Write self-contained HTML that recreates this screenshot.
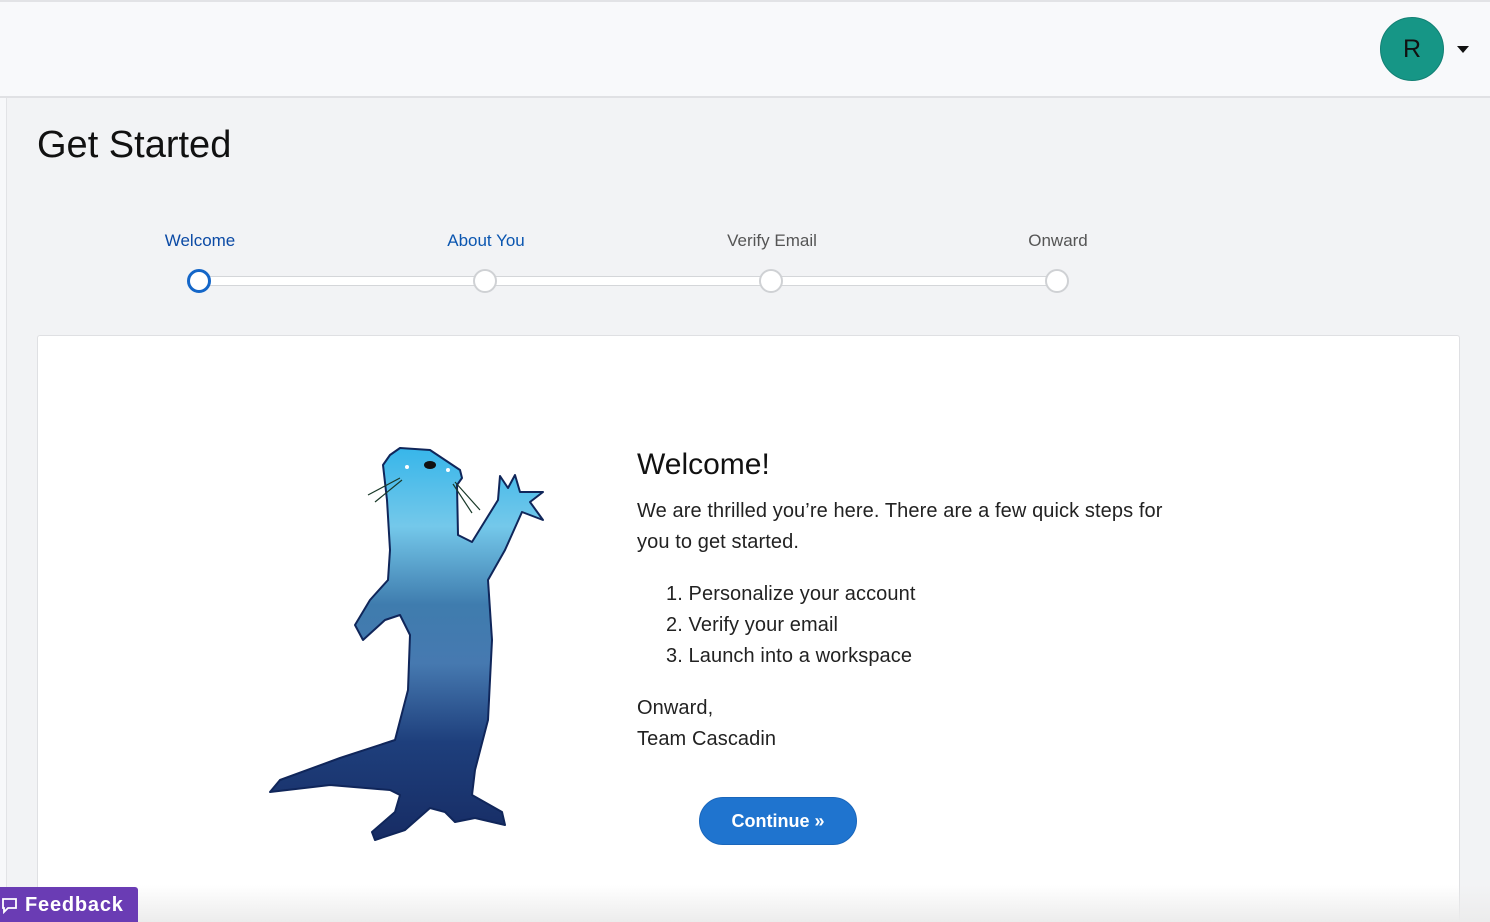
<!DOCTYPE html>
<html><head><meta charset="utf-8"><style>
*{margin:0;padding:0;box-sizing:border-box}
html,body{width:1490px;height:922px;overflow:hidden}
body{background:#f2f3f5;font-family:"Liberation Sans",sans-serif;position:relative}
.a{position:absolute;white-space:nowrap}
.hdr{position:absolute;left:0;top:0;width:1490px;height:98px;background:#f8f9fb;border-top:2px solid #e2e3e6;border-bottom:2px solid #e0e1e4}
.side{position:absolute;left:0;top:98px;width:7px;height:824px;background:#f7f8fa;border-right:1px solid #e2e3e6}
.card{position:absolute;left:37px;top:335px;width:1423px;height:587px;background:#fff;border:1px solid #dfe0e3;border-bottom:none;border-radius:3px 3px 0 0}
.step{font-size:17px;color:#555;transform:translateX(-50%)}
.dot{position:absolute;width:24px;height:24px;border-radius:50%;background:#fff;border:2px solid #cfd1d4;top:269px}
.t{font-size:20px;color:#222;letter-spacing:0.1px}
</style></head><body>
<div class="hdr"></div>
<div class="a" style="left:1380px;top:17px;width:64px;height:64px;border-radius:50%;background:#169686;border:1px solid #128074;color:#111;font-size:25px;text-align:center;line-height:62px">R</div>
<div class="a" style="left:1457px;top:46px;width:0;height:0;border-left:6px solid transparent;border-right:6px solid transparent;border-top:7px solid #111"></div>
<div class="side"></div>
<div class="a" style="left:37px;top:124px;font-size:38px;color:#111">Get Started</div>
<div class="a step" style="left:200px;top:231px;color:#0b4aa5">Welcome</div>
<div class="a step" style="left:486px;top:231px;color:#0b56b0">About You</div>
<div class="a step" style="left:772px;top:231px">Verify Email</div>
<div class="a step" style="left:1058px;top:231px">Onward</div>
<div class="a" style="left:199px;top:276px;width:859px;height:10px;background:#fff;border:1px solid #d4d6d9;border-radius:4px"></div>
<div class="dot" style="left:187px;border:3px solid #1466c8"></div>
<div class="dot" style="left:473px"></div>
<div class="dot" style="left:759px"></div>
<div class="dot" style="left:1045px"></div>
<div class="card"></div>
<svg class="a" style="left:260px;top:440px" width="300" height="410" viewBox="0 0 300 410">
<defs><linearGradient id="g" x1="0" y1="0" x2="0" y2="1">
<stop offset="0" stop-color="#37b6ea"/><stop offset="0.2" stop-color="#74c8ea"/><stop offset="0.4" stop-color="#3f7cae"/><stop offset="0.55" stop-color="#4679b0"/><stop offset="0.75" stop-color="#1e3f7c"/><stop offset="1" stop-color="#172c64"/></linearGradient></defs>
<path d="M130,15 L140,8 L170,10 L200,30 L202,38 L197,45 L198,95 L212,102 L238,60 L240,36 L248,48 L255,35 L260,52 L283,52 L270,62 L283,80 L262,72 L245,110 L228,140 L232,200 L228,280 L215,330 L212,355 L242,372 L245,385 L215,378 L195,382 L185,372 L170,368 L145,390 L115,400 L112,392 L135,372 L140,355 L130,350 L70,345 L10,352 L20,340 L80,318 L135,300 L148,250 L150,195 L140,175 L125,180 L103,200 L95,185 L110,160 L128,140 L130,110 L127,60 L123,25 Z" fill="url(#g)" stroke="#10265a" stroke-width="2" stroke-linejoin="round"/>
<ellipse cx="170" cy="25" rx="6" ry="4" fill="#111"/>
<circle cx="147" cy="27" r="2" fill="#fff"/><circle cx="188" cy="30" r="2" fill="#fff"/>
<path d="M140,38 L108,55 M142,40 L115,62 M195,42 L220,70 M193,44 L212,73" stroke="#1a3a2a" stroke-width="1.2"/>
</svg>
<div class="a" style="left:637px;top:448px;font-size:30px;color:#111">Welcome!</div>
<div class="a t" style="left:637px;top:500px">We are thrilled you’re here. There are a few quick steps for</div>
<div class="a t" style="left:637px;top:531px">you to get started.</div>
<div class="a t" style="left:666px;top:583px">1. Personalize your account</div>
<div class="a t" style="left:666px;top:614px">2. Verify your email</div>
<div class="a t" style="left:666px;top:645px">3. Launch into a workspace</div>
<div class="a t" style="left:637px;top:697px">Onward,</div>
<div class="a t" style="left:637px;top:728px">Team Cascadin</div>
<div class="a" style="left:699px;top:797px;width:158px;height:48px;border-radius:24px;background:#1f74cf;border:1px solid #1a66bb;color:#fff;font-weight:bold;font-size:18px;text-align:center;line-height:46px">Continue »</div>
<div class="a" style="left:0;top:885px;width:1490px;height:37px;background:linear-gradient(#fff0,#ececec)"></div>
<div class="a" style="left:0;top:887px;width:138px;height:35px;background:#6a3cb4;border-radius:0 3px 0 0;color:#fff;font-weight:bold;font-size:20px;letter-spacing:0.8px;line-height:36px;padding-left:25px">Feedback</div>
<svg class="a" style="left:1px;top:897px" width="17" height="17" viewBox="0 0 17 17"><path d="M2,2 H15 V11 H7 L3,15 V11 H2 Z" fill="none" stroke="#fff" stroke-width="1.8"/></svg>
</body></html>
